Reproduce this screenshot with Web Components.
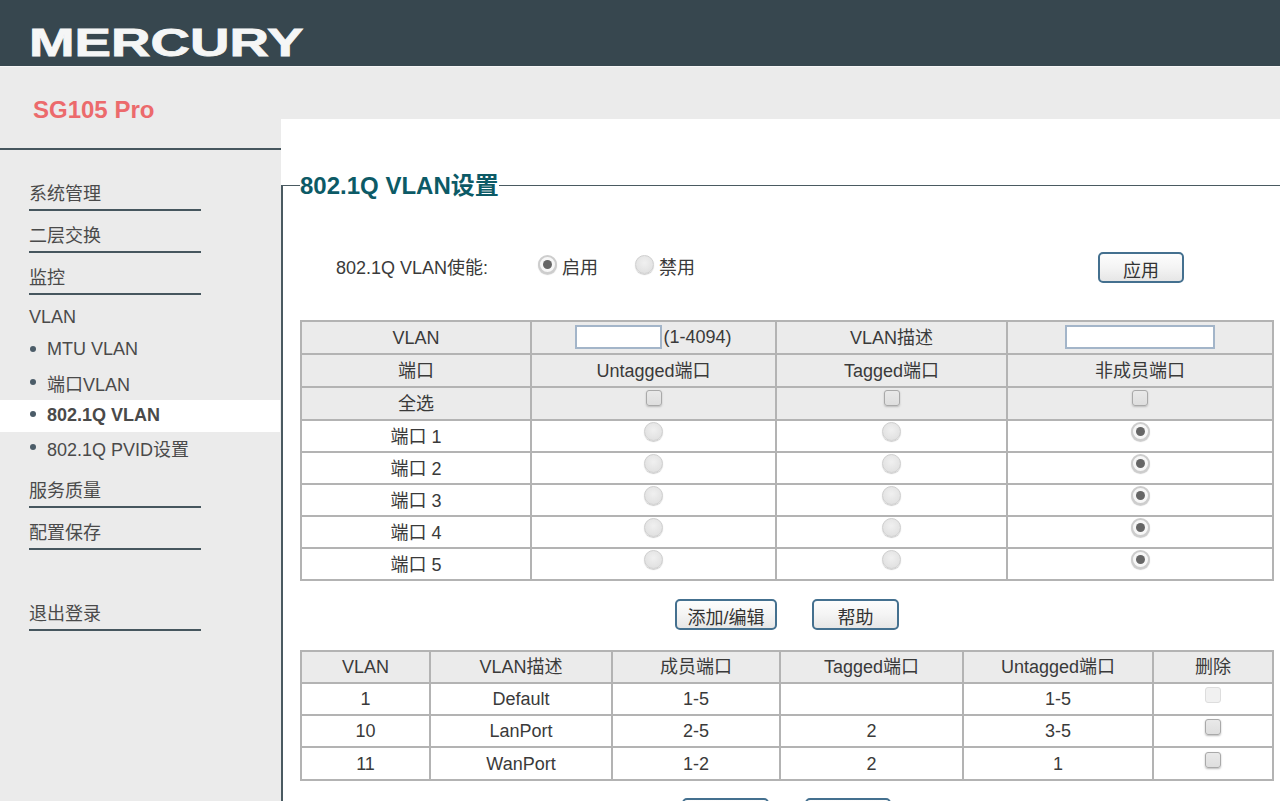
<!DOCTYPE html>
<html lang="zh">
<head>
<meta charset="utf-8">
<title>SG105 Pro</title>
<style>
  html, body { margin:0; height:801px; overflow:hidden; background:#ebebeb; }
  body { font:18px "Liberation Sans","Noto Sans CJK SC",sans-serif; color:#3a3a3a; }
</style>
</head>
<body>
<merc-header></merc-header>
<merc-layout>
  <merc-sidebar slot="side" model="SG105 Pro">
    <nav-item>系统管理</nav-item>
    <nav-item>二层交换</nav-item>
    <nav-item>监控</nav-item>
    <nav-item plain>VLAN</nav-item>
    <nav-sub h="33">MTU VLAN</nav-sub>
    <nav-sub h="33">端口VLAN</nav-sub>
    <nav-sub h="32" active>802.1Q VLAN</nav-sub>
    <nav-sub h="34">802.1Q PVID设置</nav-sub>
    <nav-item>服务质量</nav-item>
    <nav-item>配置保存</nav-item>
    <nav-item gap>退出登录</nav-item>
  </merc-sidebar>
  <vlan-panel legend="802.1Q VLAN设置">
    <vlan-enable></vlan-enable>
    <vlan-port-table></vlan-port-table>
    <button-row left="375" gap="35" top="18">
      <merc-btn w="102">添加/编辑</merc-btn>
      <merc-btn w="87">帮助</merc-btn>
    </button-row>
    <vlan-list-table></vlan-list-table>
    <button-row left="382" gap="36" top="17">
      <merc-btn w="87"></merc-btn>
      <merc-btn w="86"></merc-btn>
    </button-row>
  </vlan-panel>
</merc-layout>

<script>
// small helper, every element gets an open shadow root with its own styles
const shadow = (el, html) => { el.attachShadow({ mode: 'open' }).innerHTML = html; };

class MercHeader extends HTMLElement {
  connectedCallback() {
    shadow(this, `
      <style>
        :host { display:block; height:66px; background:#37474f; border-bottom:1px solid #f6f6f6; overflow:hidden; }
        .logo { display:inline-block; margin:20px 0 0 29px; color:#f5f6f6; font:bold 39.5px/45px "Liberation Sans",sans-serif;
                -webkit-text-stroke:.8px #f5f6f6; transform:scale(1.385,1); transform-origin:left top; }
      </style>
      <span class="logo">MERCURY</span>`);
  }
}

class MercLayout extends HTMLElement {
  connectedCallback() {
    shadow(this, `
      <style>
        :host { display:flex; height:734px; }
        .side { flex:0 0 281px; }
        .main { flex:1; min-width:0; margin-top:52px; padding-top:52px; background:#fff; overflow:hidden; }
      </style>
      <div class="side"><slot name="side"></slot></div>
      <div class="main"><slot></slot></div>`);
  }
}

class MercSidebar extends HTMLElement {
  connectedCallback() {
    shadow(this, `
      <style>
        :host { display:block; }
        .model { height:83px; box-sizing:border-box; padding:29px 0 0 33px; border-bottom:2px solid #46565e;
                 color:#ec6a6c; font-size:24px; font-weight:bold; line-height:28px; }
        nav { padding-top:19px; }
      </style>
      <div class="model">${this.getAttribute('model')}</div>
      <nav><slot></slot></nav>`);
  }
}

class NavItem extends HTMLElement {
  connectedCallback() {
    const plain = this.hasAttribute('plain');
    shadow(this, `
      <style>
        :host { display:block; margin:${this.hasAttribute('gap') ? '39px' : '0'} 0 0 29px; width:172px; height:${plain ? 39 : 42}px; box-sizing:border-box;
                padding-top:${plain ? 9 : 10}px; line-height:${plain ? 26 : 30}px; color:#4a4a4a; ${plain ? '' : 'border-bottom:2px solid #46565e;'} }
      </style>
      <slot></slot>`);
  }
}

class NavSub extends HTMLElement {
  connectedCallback() {
    const h = this.getAttribute('h');
    const on = this.hasAttribute('active');
    shadow(this, `
      <style>
        :host { display:flex; align-items:center; height:${h}px; box-sizing:border-box; padding:0 0 2px 47px; position:relative; color:#4a4a4a;
                ${on ? 'background:#fff; font-weight:bold; margin-right:1px;' : ''} }
        .dot { position:absolute; left:30px; top:calc(50% - 5px); width:6px; height:6px; border-radius:50%; background:#4b5c68; }
      </style>
      <span class="dot"></span><slot></slot>`);
  }
}

class VlanPanel extends HTMLElement {
  connectedCallback() {
    shadow(this, `
      <style>
        :host { display:block; }
        fieldset { margin:0; padding:0 0 0 17px; width:1040px; height:640px; box-sizing:border-box; border:0 solid #4a5a61;
                   border-width:1px 0 0 2px; }
        legend { padding:0; margin:0; color:#0c5a66; font-size:24px; font-weight:bold; line-height:28px; transform:translateY(1px); }
      </style>
      <fieldset>
        <legend>${this.getAttribute('legend')}</legend>
        <slot></slot>
      </fieldset>`);
  }
}

class MercBtn extends HTMLElement {
  connectedCallback() {
    shadow(this, `
      <style>
        :host { display:block; width:${this.getAttribute('w')}px; height:31px; box-sizing:border-box; padding-top:3px; text-align:center;
                line-height:28px; color:#333; border:2px solid #44708f; border-radius:5px;
                background:linear-gradient(#fdfdfd,#f4f4f4 50%,#e6e6e6); }
      </style>
      <slot></slot>`);
  }
}

class ButtonRow extends HTMLElement {
  connectedCallback() {
    shadow(this, `
      <style>
        :host { display:flex; gap:${this.getAttribute('gap')}px; margin:${this.getAttribute('top')}px 0 20px ${this.getAttribute('left')}px; }
      </style>
      <slot></slot>`);
  }
}

class XRadio extends HTMLElement {
  connectedCallback() {
    shadow(this, `
      <style>
        :host { display:inline-block; width:19px; height:19px; box-sizing:border-box; border-radius:50%; vertical-align:top;
                border:1px solid #cfcfcf; background:radial-gradient(circle at 50% 40%,#f0f0f0,#dcdcdc);
                box-shadow:0 1px 1px #ccc; position:relative; }
        :host([checked]) { background:#f7f7f7; border:2px solid #cdcdcd; }
        i { display:none; position:absolute; inset:3px; border-radius:50%; background:#666; }
        :host([checked]) i { display:block; }
      </style>
      <i></i>`);
  }
}

class XCheck extends HTMLElement {
  connectedCallback() {
    shadow(this, `
      <style>
        :host { display:inline-block; width:16px; height:16px; box-sizing:border-box; border-radius:3px; vertical-align:top;
                border:1px solid #a9a9a9; background:linear-gradient(#e9e9e9,#dedede); box-shadow:0 1px 2px #bbb; }
        :host([disabled]) { border-color:#ddd; background:#f1f1f1; box-shadow:none; }
      </style>`);
  }
}

class VlanEnable extends HTMLElement {
  connectedCallback() {
    shadow(this, `
      <style>
        :host { display:block; margin:53px 0 37px; height:31px; width:972px; }
        .row { display:flex; align-items:center; height:31px; padding-left:36px; }
        .label { width:202px; padding-bottom:3px; }
        .opt { display:flex; align-items:center; width:97px; }
        .opt span { margin-left:5px; padding-bottom:3px; }
        x-radio { margin-top:-7px; }
        merc-btn { margin-left:auto; margin-right:88px; }
      </style>
      <div class="row">
        <span class="label">802.1Q VLAN使能:</span>
        <label class="opt"><x-radio checked></x-radio><span>启用</span></label>
        <label class="opt"><x-radio></x-radio><span>禁用</span></label>
        <merc-btn w="86">应用</merc-btn>
      </div>`);
  }
}

const tableCss = `
  :host { display:block; }
  table { border-collapse:collapse; table-layout:fixed; width:972px; color:#3a3a3a; }
  td { border:2px solid #b3b3b3; padding:0; text-align:center; vertical-align:middle; line-height:22px; }
  tr.h td { background:#ebebeb; }
  td.port { padding-top:1px; }
  .pad { display:flex; justify-content:center; margin-top:-8px; }
  .pad.up { margin-top:-10px; }
  .pad.top { margin-top:-12px; }
  input { font:inherit; box-sizing:border-box; height:24px; padding:0; border:2px solid #a3b5c9; background:#fff; vertical-align:middle; outline:none; margin-bottom:2px; }
`;

class VlanPortTable extends HTMLElement {
  connectedCallback() {
    const cell = (tag, cls) => `<td><div class="pad ${cls}">${tag}</div></td>`;
    let ports = '';
    for (let n = 1; n <= 5; n++) {
      ports += `<tr style="height:32px"><td class="port">端口 ${n}</td>
        ${cell('<x-radio></x-radio>', 'up')}${cell('<x-radio></x-radio>', 'up')}${cell('<x-radio checked></x-radio>', 'up')}</tr>`;
    }
    shadow(this, `
      <style>${tableCss}</style>
      <table>
        <colgroup><col style="width:230px"><col style="width:245px"><col style="width:231px"><col style="width:266px"></colgroup>
        <tr class="h" style="height:33px"><td>VLAN</td>
          <td><input style="width:87px;margin-right:1px" aria-label="VLAN">(1-4094)</td>
          <td>VLAN描述</td>
          <td><input style="width:150px" aria-label="VLAN描述"></td></tr>
        <tr class="h" style="height:33px"><td>端口</td><td>Untagged端口</td><td>Tagged端口</td><td>非成员端口</td></tr>
        <tr class="h" style="height:33px"><td>全选</td>
          ${cell('<x-check></x-check>', 'top')}${cell('<x-check></x-check>', 'top')}${cell('<x-check></x-check>', 'top')}</tr>
        ${ports}
      </table>`);
  }
}

class VlanListTable extends HTMLElement {
  connectedCallback() {
    const rows = [
      ['1', 'Default', '1-5', '', '1-5', true],
      ['10', 'LanPort', '2-5', '2', '3-5', false],
      ['11', 'WanPort', '1-2', '2', '1', false],
    ];
    const body = rows.map((r, i) => `<tr style="height:${i === 2 ? 33 : 32}px">
      ${r.slice(0, 5).map(c => `<td>${c}</td>`).join('')}
      <td><div class="pad"><x-check${r[5] ? ' disabled' : ''}></x-check></div></td></tr>`).join('');
    shadow(this, `
      <style>${tableCss}</style>
      <table>
        <colgroup><col style="width:129px"><col style="width:182px"><col style="width:168px"><col style="width:183px"><col style="width:190px"><col style="width:120px"></colgroup>
        <tr class="h" style="height:32px"><td>VLAN</td><td>VLAN描述</td><td>成员端口</td><td>Tagged端口</td><td>Untagged端口</td><td>删除</td></tr>
        ${body}
      </table>`);
  }
}

customElements.define('merc-header', MercHeader);
customElements.define('merc-layout', MercLayout);
customElements.define('merc-sidebar', MercSidebar);
customElements.define('nav-item', NavItem);
customElements.define('nav-sub', NavSub);
customElements.define('vlan-panel', VlanPanel);
customElements.define('merc-btn', MercBtn);
customElements.define('button-row', ButtonRow);
customElements.define('x-radio', XRadio);
customElements.define('x-check', XCheck);
customElements.define('vlan-enable', VlanEnable);
customElements.define('vlan-port-table', VlanPortTable);
customElements.define('vlan-list-table', VlanListTable);
</script>
</body>
</html>
